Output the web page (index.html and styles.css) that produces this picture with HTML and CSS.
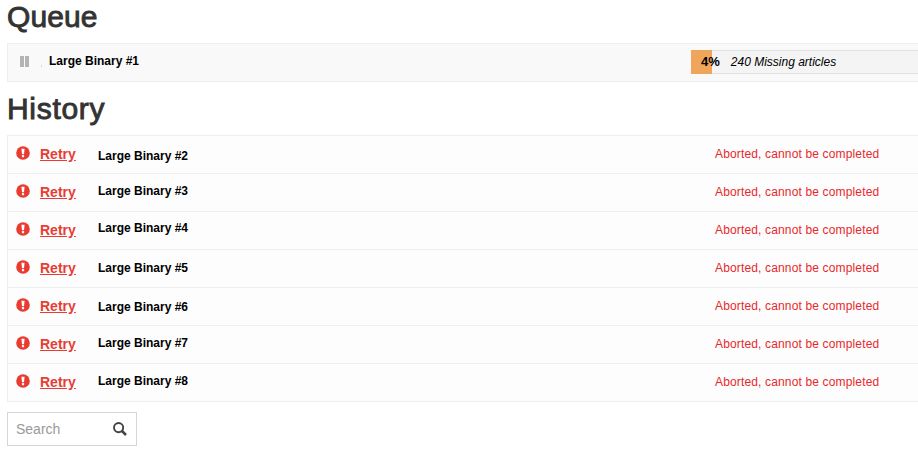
FILE: index.html
```
<!DOCTYPE html>
<html lang="en">
<head>
    <meta charset="UTF-8">
    <meta name="viewport" content="width=device-width, initial-scale=1.0">
    <title>Queue</title>
    <link rel="stylesheet" href="styles.css">
</head>
<body>
    <svg width="0" height="0" class="sprites">
        <symbol id="icon-alert" viewBox="0 0 14 14">
            <circle cx="7" cy="7" r="6.8" fill="#e83c33"/>
            <path d="M5.4 2.7h3.2L8 8.2H6z" fill="#fff"/>
            <rect x="5.9" y="9.1" width="2.2" height="2.1" fill="#fff"/>
        </symbol>
    </svg>
    <div class="container">
        <h2 class="title">Queue</h2>
        <div class="table">
            <div class="row queue-row">
                <svg class="icon-pause" width="9" height="11" viewBox="0 0 9 11"><path d="M0 0h4v11H0zM5 0h4v11H5z" fill="#b3b3b3"/></svg>
                <span class="dot"></span>
                <span class="name">Large Binary #1</span>
                <div class="progress">
                    <div class="progress-bar" style="width: 21px"></div>
                    <div class="progress-text"><strong>4%</strong><i>240 Missing articles</i></div>
                </div>
            </div>
        </div>

        <h2 class="title title-history">History</h2>
        <div class="table history">
            <div class="row">
                <svg class="icon-alert"><use href="#icon-alert"/></svg>
                <a class="retry">Retry</a>
                <span class="name low-2">Large Binary #2</span>
                <span class="status">Aborted, cannot be completed</span>
            </div>
            <div class="row">
                <svg class="icon-alert"><use href="#icon-alert"/></svg>
                <a class="retry">Retry</a>
                <span class="name high-1">Large Binary #3</span>
                <span class="status">Aborted, cannot be completed</span>
            </div>
            <div class="row">
                <svg class="icon-alert"><use href="#icon-alert"/></svg>
                <a class="retry">Retry</a>
                <span class="name high-2">Large Binary #4</span>
                <span class="status">Aborted, cannot be completed</span>
            </div>
            <div class="row">
                <svg class="icon-alert"><use href="#icon-alert"/></svg>
                <a class="retry">Retry</a>
                <span class="name">Large Binary #5</span>
                <span class="status">Aborted, cannot be completed</span>
            </div>
            <div class="row">
                <svg class="icon-alert"><use href="#icon-alert"/></svg>
                <a class="retry">Retry</a>
                <span class="name low-1">Large Binary #6</span>
                <span class="status">Aborted, cannot be completed</span>
            </div>
            <div class="row">
                <svg class="icon-alert"><use href="#icon-alert"/></svg>
                <a class="retry">Retry</a>
                <span class="name high-1">Large Binary #7</span>
                <span class="status">Aborted, cannot be completed</span>
            </div>
            <div class="row">
                <svg class="icon-alert"><use href="#icon-alert"/></svg>
                <a class="retry">Retry</a>
                <span class="name high-1">Large Binary #8</span>
                <span class="status">Aborted, cannot be completed</span>
            </div>
        </div>

        <div class="search">
            <span>Search</span>
            <svg width="14" height="14" viewBox="0 0 14 14" fill="none" stroke="#444">
                <circle cx="5.6" cy="5.6" r="4.6" stroke-width="1.9"/>
                <path d="M9 9l4 4" stroke-width="2.5"/>
            </svg>
        </div>
    </div>
</body>
</html>
```
FILE: styles.css
```
body {
    margin: 0;
    background-color: #fff;
    color: #000;
    font-family: "Liberation Sans", Arial, sans-serif;
    font-size: 12px;
    overflow: hidden;
}
.sprites {
    display: none;
}
.container {
    padding-left: 7px;
}
.title {
    margin: 0;
    height: 43px;
    line-height: 34px;
    font-size: 30px;
    font-weight: 500;
    letter-spacing: 0.1px;
    color: #333;
    -webkit-text-stroke: 0.9px #333;
}
.title-history {
    height: 53px;
    line-height: 54px;
    letter-spacing: 0.7px;
}
.table {
    border: 1px solid #eee;
    border-right: none;
    background-color: #fdfdfd;
}
.row {
    display: flex;
    align-items: flex-start;
    box-sizing: border-box;
    height: 38px;
    padding-left: 8px;
    border-bottom: 1px solid #eee;
}
.row:last-child {
    height: 37px;
    border-bottom: none;
}
.queue-row {
    padding-left: 12px;
    background-color: #f9f9f9;
}
.icon-pause {
    margin-top: 12px;
}
.dot {
    width: 1px;
    height: 2px;
    margin: 21px 8px 0 12px;
    background-color: #ddd5cb;
}
.name {
    width: 617px;
    padding-top: 11px;
    line-height: 14px;
    font-weight: bold;
}
.queue-row .name {
    width: 642px;
    margin-left: -1px;
    padding-top: 10px;
}
.low-2 {
    padding-top: 13px;
}
.low-1 {
    padding-top: 12px;
}
.high-1 {
    padding-top: 10px;
}
.high-2 {
    padding-top: 9px;
}
.progress {
    display: flex;
    flex: 1;
    box-sizing: border-box;
    height: 24px;
    margin-top: 6px;
    border: solid #e2e2e2;
    border-width: 1px 0;
    background-color: #f4f4f4;
}
.progress-bar {
    flex-shrink: 0;
    margin: -1px 0;
    background-color: #efa65b;
}
.progress-text {
    display: flex;
    gap: 11px;
    margin-left: -11px;
    line-height: 22px;
    white-space: nowrap;
}
.progress-text strong {
    font-size: 13px;
}
.icon-alert {
    width: 14px;
    height: 14px;
    margin-top: 10px;
}
.retry {
    width: 58px;
    margin-left: 10px;
    padding-top: 9px;
    line-height: 18px;
    font-size: 14px;
    font-weight: bold;
    color: #e83c33;
    text-decoration: underline;
}
.status {
    padding-top: 11px;
    line-height: 14px;
    letter-spacing: 0.15px;
    color: #e8282c;
}
.search {
    display: flex;
    align-items: center;
    justify-content: space-between;
    box-sizing: border-box;
    width: 130px;
    height: 34px;
    margin-top: 10px;
    padding: 0 9px 0 8px;
    border: 1px solid #d6d6d6;
    font-size: 14px;
    color: #999;
}
```
